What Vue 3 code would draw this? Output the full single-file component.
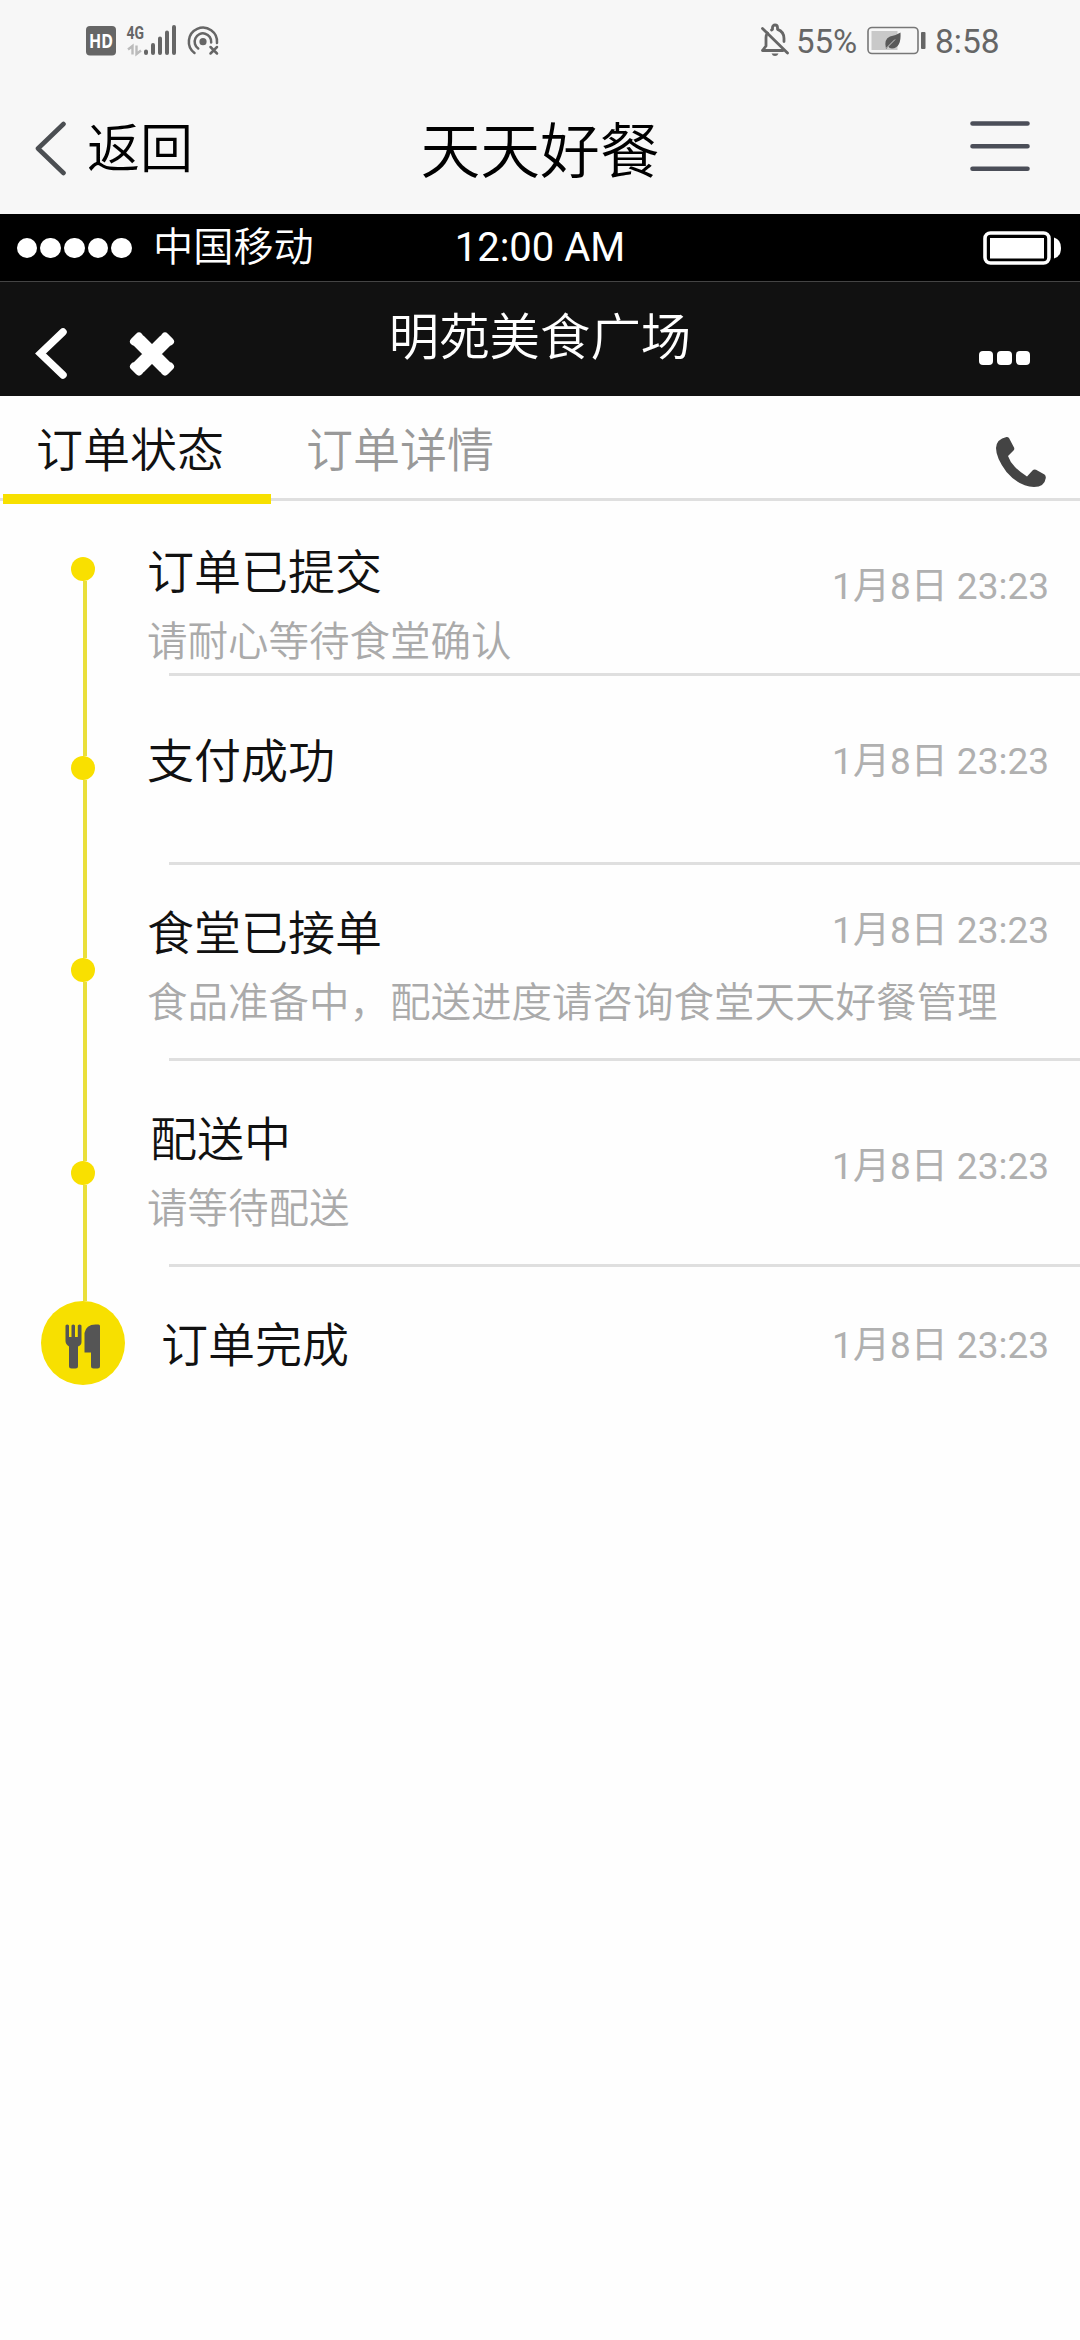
<script setup>
const railGaps = [175, 178, 179, 116]

const steps = [
  { key: 'submitted', title: '订单已提交', note: '请耐心等待食堂确认', time: '1月8日 23:23' },
  { key: 'paid', title: '支付成功', note: '', time: '1月8日 23:23' },
  { key: 'accepted', title: '食堂已接单', note: '食品准备中，配送进度请咨询食堂天天好餐管理', time: '1月8日 23:23' },
  { key: 'delivering', title: '配送中', note: '请等待配送', time: '1月8日 23:23' },
  { key: 'done', title: '订单完成', note: '', time: '1月8日 23:23' },
]
</script>

<template>
  <div class="screen">
    <header class="system">
      <div class="status">
        <svg class="status-left" width="134" height="36" viewBox="84 22 134 36">
          <rect x="86" y="26" width="30" height="29.5" rx="4" fill="#666" />
          <text x="101" y="48" class="hd" text-anchor="middle" textLength="24" lengthAdjust="spacingAndGlyphs">HD</text>
          <text x="126.5" y="38.5" class="net" textLength="17.5" lengthAdjust="spacingAndGlyphs">4G</text>
          <g stroke="#bbb" stroke-width="2.4" fill="none">
            <path d="M132.5 54.500V46L128 49.500" />
            <path d="M136.500 45.500V54L141 50.500" />
          </g>
          <g stroke="#666" stroke-width="4" stroke-linecap="round">
            <path d="M146 51.500V53M153 45V53M160 38.500V53M167 32.500V53M174 27V53" />
          </g>
          <circle cx="203" cy="41.700" r="3.600" fill="#666" />
          <g stroke="#666" stroke-width="2.500" fill="none" stroke-linecap="round">
            <path d="M198.200 48.500A8.300 8.300 0 1 1 211.200 42.500" />
            <path d="M194.500 53A14.100 14.100 0 1 1 217 43" />
            <path d="M210.500 47L217 53.500M217 47L210.500 53.500" />
          </g>
        </svg>
        <div class="status-right">
          <svg width="30" height="34" viewBox="0 0 30 34">
            <g fill="none" stroke="#666" stroke-width="2.800" stroke-linecap="round" stroke-linejoin="round">
              <path d="M2.500 5.500L27.500 30" />
              <path d="M2.500 27.500H23M2.500 27.500L6 23V14.500Q6 12 7.500 10" />
              <path d="M11.500 7L12.500 6.300V4.500A2.500 2.500 0 0 1 17.500 4.500V6.300Q24 8.500 24 15.500V18.500" />
            </g>
            <path d="M11.500 30.500H18.500Q17.500 33 15 33T11.500 30.500Z" fill="#666" />
          </svg>
          <span class="percent">55%</span>
          <svg class="power" width="59" height="29" viewBox="0 0 59 29">
            <rect x="1" y="1.500" width="50" height="26" rx="4" fill="none" stroke="#777" stroke-width="1.600" />
            <rect x="4.500" y="5" width="26" height="19" fill="#c9c9c9" />
            <path d="M33.500 6.500Q34.500 22 25 22.500Q22 22.500 21.500 20.500L19 23Q16.500 13 23 10.500Q29 9.500 33.500 6.500Z" fill="#5a5a5a" />
            <path d="M19.500 22L28 13.500" stroke="#ccc" stroke-width="1" />
            <rect x="54" y="6" width="4.500" height="17" rx="1" fill="#666" />
          </svg>
          <span class="clock">8:58</span>
        </div>
      </div>
      <nav class="outer-nav">
        <div class="side back">
          <svg width="34" height="56" viewBox="0 0 34 56">
            <path d="M29.500 4L4 28.500L29.500 53" fill="none" stroke="#4b4e52" stroke-width="4.600" stroke-linecap="round" stroke-linejoin="round" />
          </svg>
          <span>返回</span>
        </div>
        <h1>天天好餐</h1>
        <div class="side menu">
          <svg width="60" height="52" viewBox="0 0 60 52">
            <path d="M2.500 2.500H57.500M2.500 25.300H57.500M2.500 47.700H57.500" stroke="#4b4e58" stroke-width="4.600" stroke-linecap="round" />
          </svg>
        </div>
      </nav>
    </header>

    <div class="carrier-bar">
      <div class="carrier">
        <div class="dots"><i v-for="n in 5" :key="n"></i></div>
        <span>中国移动</span>
      </div>
      <span class="am">12:00 AM</span>
      <div class="battery">
        <svg width="79" height="35" viewBox="0 0 79 35">
          <rect x="2" y="2" width="64" height="30" rx="5.500" fill="none" stroke="#fff" stroke-width="3.600" />
          <rect x="7" y="7" width="54" height="20.500" fill="#fff" />
          <path d="M71 6.500Q78 8.500 78 17T71 27.500Z" fill="#fff" />
        </svg>
      </div>
    </div>

    <nav class="shop-nav">
      <div class="shop-actions">
        <svg width="33" height="54" viewBox="0 0 33 54">
          <path d="M28 5L5.500 26.500L28 48" fill="none" stroke="#fff" stroke-width="7.500" stroke-linecap="round" />
        </svg>
        <svg width="46" height="46" viewBox="0 0 46 46">
          <path d="M9.500 9.500L36.500 36.500M36.500 9.500L9.500 36.500" stroke="#fff" stroke-width="14" />
          <path d="M5 10.500L10 5.500M41 10.500L36 5.500M5 35.500L10 40.500M41 35.500L36 40.500" stroke="#fff" stroke-width="8" stroke-linecap="round" />
        </svg>
      </div>
      <h2>明苑美食广场</h2>
      <div class="more"><i></i><i></i><i></i></div>
    </nav>

    <div class="tabs">
      <div class="tab active">订单状态</div>
      <div class="tab">订单详情</div>
      <svg class="phone" width="52" height="52" viewBox="0 0 52 52">
        <path d="M11.500 1Q13 .8 14 2L19 11.500Q19.800 13 18.500 14.500L13 20Q15 26 20 31T32 40.500L37.500 34.500Q39 33 41 33.800L49.500 38.500Q51 39.500 50.800 42Q49.500 51 39 51Q24 50.500 11.500 36Q1 22 1 12Q1.500 3 11.500 1Z" fill="#444" />
      </svg>
    </div>

    <main class="timeline">
      <div class="rail">
        <template v-for="(gap, i) in railGaps" :key="i">
          <i class="node"></i>
          <i class="line" :style="{ height: gap + 'px' }"></i>
        </template>
        <div class="finish">
          <svg width="84" height="84" viewBox="0 0 84 84">
            <g fill="#555">
              <path d="M24.500 24.500Q26.200 22.500 28 24.500V36H30.500V24.500Q32.200 22.500 34 24.500V36H36.800V24.500Q38.600 22.500 40.500 24.500V41Q40.500 44 37 45.500V65Q37 67.500 34.500 67.500H30.500Q28 67.500 28 65V45.500Q24.500 43 24.500 40Z" />
              <path d="M43.500 51.500V32Q45 23.500 54.500 23.500H57.500Q59 23.500 59 25V65Q59 67.500 56.500 67.500H52.500Q50 67.500 50 65V51.500Z" />
            </g>
          </svg>
        </div>
      </div>
      <div class="steps">
        <section v-for="s in steps" :key="s.key" class="step" :class="s.key">
          <div class="text">
            <h3>{{ s.title }}</h3>
            <p v-if="s.note">{{ s.note }}</p>
          </div>
          <time>{{ s.time }}</time>
          <div class="divider"></div>
        </section>
      </div>
    </main>
  </div>
</template>

<style>
body {
  background: #fefefe;
}
</style>

<style scoped>
.screen {
  width: 1080px;
  min-height: 2340px;
  background: #fefefe;
  font-family: "Noto Sans CJK SC", sans-serif;
  font-weight: 350;
  color: #111;
}
h1, h2, h3, p {
  margin: 0;
  font-weight: 350;
}
i {
  display: block;
}
svg {
  display: block;
}
.system {
  height: 214px;
  background: #f7f7f7;
}
.status {
  height: 80px;
  padding: 0 79px 0 84px;
  display: flex;
  justify-content: space-between;
  align-items: center;
  box-sizing: border-box;
}
.status-left {
  overflow: visible;
}
.hd {
  font: 700 20px "Noto Sans", sans-serif;
  fill: #fff;
}
.net {
  font: 700 18.500px Roboto, sans-serif;
  fill: #666;
}
.status-right {
  display: flex;
  align-items: center;
  font: 400 33px/40px Roboto, sans-serif;
  color: #666;
}
.percent {
  width: 62px;
  margin-left: 6px;
  margin-top: 3px;
}
.power {
  margin: 1px 9px 0 9px;
}
.clock {
  width: 66px;
  margin-top: 3px;
  font-size: 33.500px;
}
.outer-nav {
  height: 134px;
  display: grid;
  grid-template-columns: 1fr auto 1fr;
  align-items: start;
  color: #000;
}
.side {
  display: flex;
  align-items: center;
}
.back {
  padding: 40px 0 0 34px;
  gap: 19px;
  font-size: 53px;
  line-height: 56px;
}
.back span {
  margin-top: -7px;
}
.outer-nav h1 {
  margin-top: 37px;
  font-size: 59.800px;
  line-height: 60px;
}
.menu {
  padding: 41px 50px 0 0;
  justify-content: flex-end;
}
.carrier-bar {
  height: 67px;
  display: grid;
  grid-template-columns: 1fr auto 1fr;
  background: #000;
  color: #fff;
  border-bottom: 1px solid #444;
}
.carrier {
  display: flex;
  padding-left: 16.500px;
  font-size: 40.200px;
  line-height: 40px;
}
.carrier span {
  margin: 10px 0 0 21px;
}
.dots {
  display: flex;
  gap: 2.900px;
  margin-top: 23.500px;
}
.dots i {
  width: 20.800px;
  height: 20.800px;
  border-radius: 50%;
  background: #fff;
}
.am {
  margin-top: 13.500px;
  font: 400 40px/40px Roboto, sans-serif;
}
.battery {
  display: flex;
  justify-content: flex-end;
  padding: 17px 18.500px 0 0;
}
.shop-nav {
  height: 114px;
  display: grid;
  grid-template-columns: 1fr auto 1fr;
  background: #111;
  color: #fff;
}
.shop-actions {
  display: flex;
  align-items: flex-start;
  gap: 61px;
  padding: 45px 0 0 35px;
}
.shop-actions svg + svg {
  margin-top: 4px;
}
.shop-nav h2 {
  margin-top: 27px;
  font-size: 50.400px;
  line-height: 50px;
}
.more {
  display: flex;
  justify-content: flex-end;
  gap: 4px;
  padding: 69px 50px 0 0;
}
.more i {
  width: 14.300px;
  height: 14.300px;
  border-radius: 4px;
  background: #fff;
}
.tabs {
  height: 105px;
  display: flex;
  box-sizing: border-box;
  padding-left: 3px;
  border-bottom: 3px solid #dfdfdf;
}
.tab {
  width: 268px;
  height: 108px;
  box-sizing: border-box;
  padding: 27px 0 0 33px;
  font-size: 47px;
  line-height: 47px;
  color: #999;
}
.tab + .tab {
  padding-left: 35px;
}
.tab.active {
  color: #111;
  border-bottom: 10px solid #f7e000;
}
.phone {
  margin: 40px 33px 0 auto;
}
.timeline {
  display: flex;
}
.rail {
  width: 147px;
  padding-top: 56px;
  flex: none;
}
.node {
  width: 24px;
  height: 24px;
  margin-left: 71px;
  border-radius: 50%;
  background: #f9e000;
}
.line {
  width: 4px;
  margin-left: 82.500px;
  background: #eadf3a;
}
.finish {
  width: 84px;
  height: 84px;
  margin-left: 41px;
  border-radius: 50%;
  background: #f7e000;
}
.steps {
  flex: 1;
}
.step {
  display: grid;
  grid-template-columns: 1fr auto;
  grid-template-rows: 1fr 3px;
  box-sizing: border-box;
}
.text h3 {
  font-size: 47px;
  line-height: 47px;
}
.text p {
  margin-top: 27px;
  font-size: 40.500px;
  line-height: 40px;
  color: #aaa;
  white-space: nowrap;
}
.step .text {
  width: 600px;
}
time {
  padding-right: 31px;
  font: 400 37px/37px Roboto, "Noto Sans CJK SC", sans-serif;
  color: #b0b0b0;
  white-space: nowrap;
}
.divider {
  grid-column: 1 / 3;
  margin-left: 22px;
  background: #dfdfdf;
}
.submitted { height: 175px; }
.submitted .text { padding-top: 44px; }
.submitted time { padding-top: 67px; }
.paid { height: 189px; }
.paid .text { padding-top: 58px; }
.paid time { padding-top: 67px; }
.accepted { height: 196px; }
.accepted .text { padding-top: 41px; }
.accepted time { padding-top: 47px; }
.delivering { height: 206px; }
.delivering .text { padding-top: 51px; }
.delivering h3 { padding-left: 3px; }
.delivering time { padding-top: 87px; }
.done { height: 140px; }
.done .text { padding: 51px 0 0 14px; }
.done time { padding-top: 60px; }
.done .divider { background: none; }
</style>
